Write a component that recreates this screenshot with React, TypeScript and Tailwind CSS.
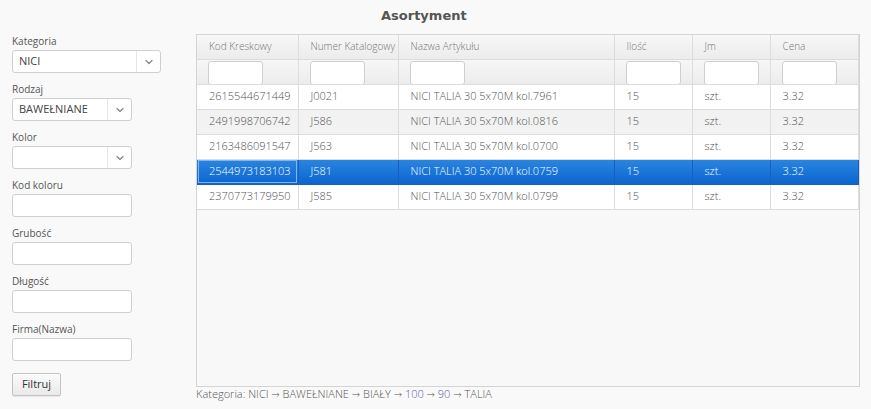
import { ChevronDown } from 'lucide-react'

const rows = [
  { kod: '2615544671449', nr: 'J0021', nazwa: 'NICI TALIA 30 5x70M kol.7961' },
  { kod: '2491998706742', nr: 'J586', nazwa: 'NICI TALIA 30 5x70M kol.0816' },
  { kod: '2163486091547', nr: 'J563', nazwa: 'NICI TALIA 30 5x70M kol.0700' },
  { kod: '2544973183103', nr: 'J581', nazwa: 'NICI TALIA 30 5x70M kol.0759' },
  { kod: '2370773179950', nr: 'J585', nazwa: 'NICI TALIA 30 5x70M kol.0799' },
]

const cols = [
  { label: 'Kod Kreskowy', w: 'w-[101px]' },
  { label: 'Numer Katalogowy', w: 'w-[100px]' },
  { label: 'Nazwa Artykułu', w: 'w-[216px]' },
  { label: 'Ilość', w: 'w-[78px]' },
  { label: 'Jm', w: 'w-[78px]' },
  { label: 'Cena', w: 'w-[88px]' },
]

function Select({ value, wide }: { value?: string; wide?: boolean }) {
  return (
    <div
      className={`flex h-[23px] items-stretch rounded-[3px] border border-[#cfcfcf] bg-white ${wide ? 'w-[149px]' : 'w-[120px]'}`}
    >
      <span className="flex flex-1 items-center pl-[6px] text-[11px] text-[#444]">{value}</span>
      <span className="flex w-[24px] items-center justify-center border-l border-[#e6e6e6]">
        <ChevronDown className="h-[12px] w-[12px] text-[#888]" strokeWidth={2.5} />
      </span>
    </div>
  )
}

function Field({ label, children }: { label: string; children?: React.ReactNode }) {
  return (
    <div className="mb-[9px]">
      <div className="mb-[2px] h-[14px] text-[10px] leading-[14px] text-[#555]">{label}</div>
      {children ?? <div className="h-[23px] w-[120px] rounded-[3px] border border-[#cfcfcf] bg-white" />}
    </div>
  )
}

const Arrow = () => <span className="font-['DejaVu_Sans',sans-serif] text-[10px]">→</span>

export default function App() {
  return (
    <div className="h-[409px] w-[871px] overflow-hidden bg-[#f9f9f9] font-['Open_Sans',sans-serif]">
      <div className="flex h-[31px] items-center pl-[381px] font-['DejaVu_Sans',sans-serif] text-[13px] font-bold text-[#555]">
        Asortyment
      </div>

      <div className="flex">
        {/* filters */}
        <div className="w-[196px] pl-[12px] pt-[3px]">
          <Field label="Kategoria">
            <Select value="NICI" wide />
          </Field>
          <Field label="Rodzaj">
            <Select value="BAWEŁNIANE" />
          </Field>
          <Field label="Kolor">
            <Select />
          </Field>
          <Field label="Kod koloru" />
          <Field label="Grubość" />
          <Field label="Długość" />
          <Field label="Firma(Nazwa)" />
          <button className="h-[23px] w-[49px] rounded-[2px] border border-[#c4c4c4] bg-gradient-to-b from-[#fbfbfb] to-[#e9e9e9] text-[11px] text-[#333] shadow-[0_1px_1px_rgba(0,0,0,0.08)]">
            Filtruj
          </button>
        </div>

        {/* table */}
        <div className="flex flex-col">
          <div className="mt-[3px] h-[353px] w-[664px] border border-[#d4d4d4] bg-[#f8f8f8]">
            <table className="table-fixed border-collapse text-left">
              <thead>
                <tr className="h-[24px] bg-gradient-to-b from-[#f7f7f7] to-[#ececec]">
                  {cols.map((c) => (
                    <th
                      key={c.label}
                      className={`${c.w} whitespace-nowrap border-b border-r border-[#dcdcdc] pl-[12px] text-[10px] font-light text-[#777]`}
                    >
                      {c.label}
                    </th>
                  ))}
                </tr>
                <tr className="h-[25px] bg-gradient-to-b from-[#f7f7f7] to-[#ececec]">
                  {cols.map((c) => (
                    <th key={c.label} className="border-b border-r border-[#dcdcdc] pl-[11px] align-bottom">
                      <div className="mb-[-1px] h-[24px] w-[55px] rounded-[3px] border border-[#cfcfcf] bg-white" />
                    </th>
                  ))}
                </tr>
              </thead>
              <tbody>
                {rows.map((r, i) => {
                  const sel = i === 3
                  const rowCls = sel
                    ? 'bg-gradient-to-b from-[#2a86e0] to-[#0c64cf] text-white'
                    : i % 2 === 1
                      ? 'bg-[#f2f2f2] text-[#555]'
                      : 'bg-white text-[#555]'
                  const cell = `whitespace-nowrap border-b border-r ${sel ? 'border-[#1560c0]' : 'border-[#dcdcdc]'} pl-[12px] text-[11px] font-light`
                  return (
                    <tr key={r.kod} className={`h-[25px] ${rowCls}`}>
                      <td className={`${cell} ${sel ? 'outline outline-1 -outline-offset-2 outline-[#7fb6ee]' : ''}`}>{r.kod}</td>
                      <td className={cell}>{r.nr}</td>
                      <td className={cell}>{r.nazwa}</td>
                      <td className={cell}>15</td>
                      <td className={cell}>szt.</td>
                      <td className={cell}>3.32</td>
                    </tr>
                  )
                })}
              </tbody>
            </table>
          </div>
          <div className="-mt-[1px] text-[11px] font-light text-[#555]">
            Kategoria: NICI <Arrow /> BAWEŁNIANE <Arrow /> BIAŁY <Arrow />{' '}
            <span className="text-[#5c5fa8]">100</span> <Arrow /> <span className="text-[#5c5fa8]">90</span>{' '}
            <Arrow /> TALIA
          </div>
        </div>
      </div>
    </div>
  )
}
